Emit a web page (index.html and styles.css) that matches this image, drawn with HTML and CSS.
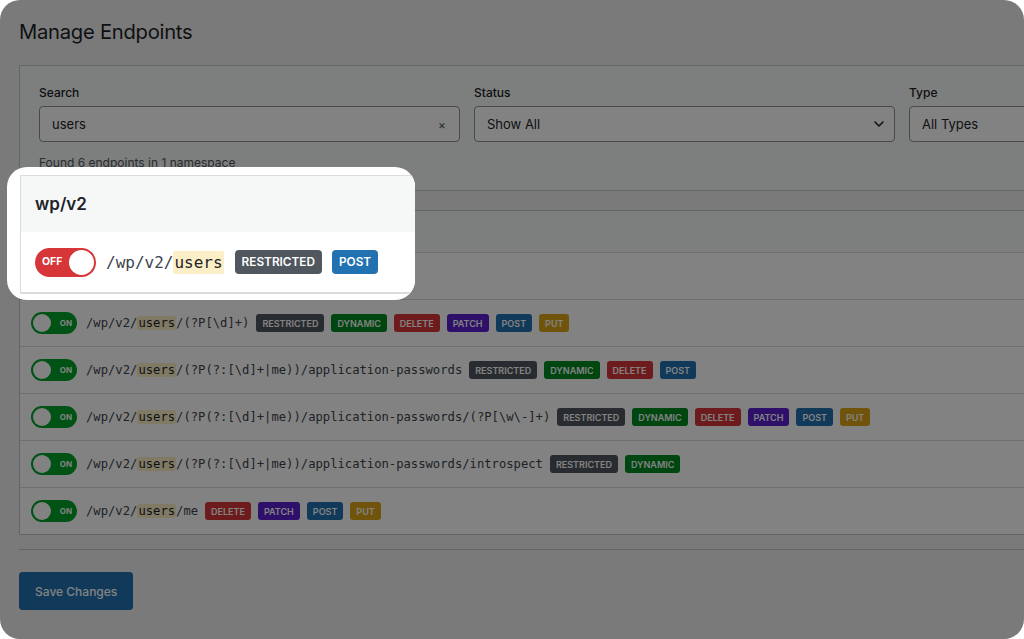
FILE: index.html
```html
<!DOCTYPE html>
<html lang="en">
<head>
<meta charset="utf-8">
<title>Manage Endpoints</title>
<link rel="stylesheet" href="styles.css">
</head>
<body>
<div class="frame">
  <div class="page">
    <h1 class="title">Manage Endpoints</h1>

    <section class="filters">
      <div class="filter-grid">
        <div class="field">
          <label class="label">Search</label>
          <div class="control control-search">
            <span class="control-text">users</span>
            <span class="clear">×</span>
          </div>
        </div>
        <div class="field">
          <label class="label">Status</label>
          <div class="control">
            <span class="control-text">Show All</span>
            <svg class="chevron" width="10" height="6" viewBox="0 0 10 6"><path d="M1 1l4 4 4-4"/></svg>
          </div>
        </div>
        <div class="field">
          <label class="label">Type</label>
          <div class="control">
            <span class="control-text">All Types</span>
            <svg class="chevron" width="10" height="6" viewBox="0 0 10 6"><path d="M1 1l4 4 4-4"/></svg>
          </div>
        </div>
      </div>
      <p class="found">Found 6 endpoints in 1 namespace</p>
    </section>

    <section class="ns">
      <header class="ns-head">wp/v2</header>
      <div class="row">
        <span class="toggle toggle-off"><span class="toggle-label">OFF</span><span class="knob"></span></span>
        <span class="path">/wp/v2/<span class="hl">users</span></span>
        <span class="badge b-restricted">RESTRICTED</span>
        <span class="badge b-post">POST</span>
      </div>
      <div class="row">
        <span class="toggle toggle-on"><span class="knob"></span><span class="toggle-label">ON</span></span>
        <span class="path">/wp/v2/<span class="hl">users</span>/(?P[\d]+)</span>
        <span class="badge b-restricted">RESTRICTED</span>
        <span class="badge b-dynamic">DYNAMIC</span>
        <span class="badge b-delete">DELETE</span>
        <span class="badge b-patch">PATCH</span>
        <span class="badge b-post">POST</span>
        <span class="badge b-put">PUT</span>
      </div>
      <div class="row">
        <span class="toggle toggle-on"><span class="knob"></span><span class="toggle-label">ON</span></span>
        <span class="path">/wp/v2/<span class="hl">users</span>/(?P(?:[\d]+|me))/application-passwords</span>
        <span class="badge b-restricted">RESTRICTED</span>
        <span class="badge b-dynamic">DYNAMIC</span>
        <span class="badge b-delete">DELETE</span>
        <span class="badge b-post">POST</span>
      </div>
      <div class="row">
        <span class="toggle toggle-on"><span class="knob"></span><span class="toggle-label">ON</span></span>
        <span class="path">/wp/v2/<span class="hl">users</span>/(?P(?:[\d]+|me))/application-passwords/(?P[\w\-]+)</span>
        <span class="badge b-restricted">RESTRICTED</span>
        <span class="badge b-dynamic">DYNAMIC</span>
        <span class="badge b-delete">DELETE</span>
        <span class="badge b-patch">PATCH</span>
        <span class="badge b-post">POST</span>
        <span class="badge b-put">PUT</span>
      </div>
      <div class="row">
        <span class="toggle toggle-on"><span class="knob"></span><span class="toggle-label">ON</span></span>
        <span class="path">/wp/v2/<span class="hl">users</span>/(?P(?:[\d]+|me))/application-passwords/introspect</span>
        <span class="badge b-restricted">RESTRICTED</span>
        <span class="badge b-dynamic">DYNAMIC</span>
      </div>
      <div class="row">
        <span class="toggle toggle-on"><span class="knob"></span><span class="toggle-label">ON</span></span>
        <span class="path">/wp/v2/<span class="hl">users</span>/me</span>
        <span class="badge b-delete">DELETE</span>
        <span class="badge b-patch">PATCH</span>
        <span class="badge b-post">POST</span>
        <span class="badge b-put">PUT</span>
      </div>
    </section>

    <hr class="divider">

    <button class="save" type="button">Save Changes</button>
  </div>

  <div class="dim"></div>

  <div class="spotlight">
    <div class="ns ns-zoom">
      <header class="ns-head">wp/v2</header>
      <div class="row">
        <span class="toggle toggle-off"><span class="toggle-label">OFF</span><span class="knob"></span></span>
        <span class="path">/wp/v2/<span class="hl">users</span></span>
        <span class="badge b-restricted">RESTRICTED</span>
        <span class="badge b-post">POST</span>
      </div>
    </div>
  </div>
</div>
</body>
</html>
```

FILE: styles.css
```css
* { box-sizing: border-box; }

html, body {
  margin: 0;
  background: #ffffff;
}

body {
  font-family: Inter, "Noto Sans", "Liberation Sans", sans-serif;
  color: #1d2327;
}

.frame {
  position: relative;
  width: 1024px;
  height: 639px;
  border-radius: 20px;
  overflow: hidden;
  background: #f0f0f1;
}

.page {
  width: 1370px;
  padding: 19px 0 0 19px;
}

.title {
  margin: 0 0 20px;
  font-size: 20.2px;
  line-height: 26px;
  font-weight: 400;
  letter-spacing: -0.25px;
  color: #1d2327;
}

/* filters card */
.filters {
  width: 1331px;
  border: 1px solid #c3c4c7;
  background: #f6f7f7;
  padding: 19px 19px 19px;
}

.filter-grid {
  display: grid;
  grid-template-columns: repeat(3, 421px);
  column-gap: 14px;
}

.label {
  display: block;
  font-size: 12px;
  line-height: 16px;
  font-weight: 500;
  margin-bottom: 5px;
}

.control {
  height: 36px;
  border: 1px solid #8c8f94;
  border-radius: 4px;
  background: #ffffff;
  padding: 0 10px 0 12px;
  display: flex;
  align-items: center;
  justify-content: space-between;
  font-size: 13px;
  color: #1d2327;
}

.control-search { padding-right: 13px; }

.clear {
  font-size: 12px;
  color: #50575e;
}

.chevron path {
  fill: none;
  stroke: #1d2327;
  stroke-width: 1.6;
  stroke-linecap: round;
  stroke-linejoin: round;
}

.found {
  margin: 13px 0 0;
  font-size: 12px;
  line-height: 16px;
  color: #50575e;
}

/* namespace list */
.ns {
  width: 1331px;
  margin-top: 19px;
  border: 1px solid #c3c4c7;
  background: #ffffff;
}

.ns-head {
  height: 42px;
  display: flex;
  align-items: center;
  padding-left: 12px;
  background: #f6f7f7;
  border-bottom: 1px solid #dcdcde;
  font-size: 14px;
  font-weight: 600;
}

.row {
  height: 47px;
  display: flex;
  align-items: center;
  gap: 7px;
  padding-left: 11px;
  border-bottom: 1px solid #dcdcde;
}

.row:last-child { border-bottom: none; height: 46px; }

.toggle {
  position: relative;
  flex: none;
  display: flex;
  align-items: center;
  width: 46px;
  height: 22px;
  border-radius: 11px;
  margin-right: 2px;
  color: #ffffff;
  font-weight: 700;
}

.toggle-on {
  background: #00a32a;
  justify-content: space-between;
  padding: 0 5px 0 2px;
}

.toggle-off {
  background: #d63638;
  justify-content: space-between;
  padding: 0 2px 0 6px;
}

.toggle-label {
  font-size: 8px;
  line-height: 1;
}

.knob {
  width: 18px;
  height: 18px;
  border-radius: 50%;
  background: #ffffff;
}

.path {
  font-family: "DejaVu Sans Mono", "Liberation Mono", monospace;
  font-size: 12.2px;
  color: #3c434a;
  white-space: nowrap;
}

.hl {
  background: #fcefc7;
  color: #1d2327;
  padding: 0 1px;
  border-radius: 2px;
}

.badge {
  flex: none;
  display: inline-flex;
  align-items: center;
  height: 18px;
  padding: 0 6px;
  border-radius: 3px;
  font-size: 9px;
  font-weight: 600;
  color: #ffffff;
}

.b-restricted { background: #50575e; }
.b-dynamic { background: #008a20; }
.b-delete { background: #d63638; }
.b-patch { background: #5a1fcf; }
.b-post { background: #2271b1; }
.b-put { background: #dba617; }

.divider {
  width: 1331px;
  margin: 14px 0 0;
  border: 0;
  border-top: 1px solid #c3c4c7;
}

.save {
  margin-top: 22px;
  height: 38px;
  padding: 0 15px;
  border: 1px solid #2271b1;
  border-radius: 3px;
  background: #2271b1;
  color: #ffffff;
  font-family: Inter, "Noto Sans", sans-serif;
  font-size: 12px;
  font-weight: 500;
}

/* dimming overlay */
.dim {
  position: absolute;
  inset: 0;
  background: rgba(0, 0, 0, 0.49);
  z-index: 1;
}

/* highlighted callout */
.spotlight {
  position: absolute;
  left: 7px;
  top: 167px;
  width: 408px;
  height: 133px;
  background: #ffffff;
  border-radius: 20px;
  overflow: hidden;
  z-index: 2;
}

.ns-zoom {
  width: 700px;
  margin: 8px 0 0 13px;
  border-color: #dcdcde;
  border-right: none;
}

.ns-zoom .ns-head {
  height: 56px;
  padding-left: 14px;
  font-size: 17px;
  border-bottom: none;
}

.ns-zoom .row,
.ns-zoom .row:last-child {
  height: 61px;
  gap: 10px;
  padding-left: 14px;
  border-bottom: 1px solid #dcdcde;
}

.ns-zoom .toggle {
  width: 61px;
  height: 29px;
  border-radius: 15px;
  margin-right: 0;
  padding: 0 2px 0 7px;
}

.ns-zoom .toggle-label { font-size: 10.5px; }

.ns-zoom .knob {
  width: 25px;
  height: 25px;
}

.ns-zoom .path { font-size: 16px; margin-right: 1px; }

.ns-zoom .hl { padding: 2px 1px; }

.ns-zoom .badge {
  height: 24px;
  padding: 0 7px;
  border-radius: 4px;
  font-size: 11.8px;
}
```
